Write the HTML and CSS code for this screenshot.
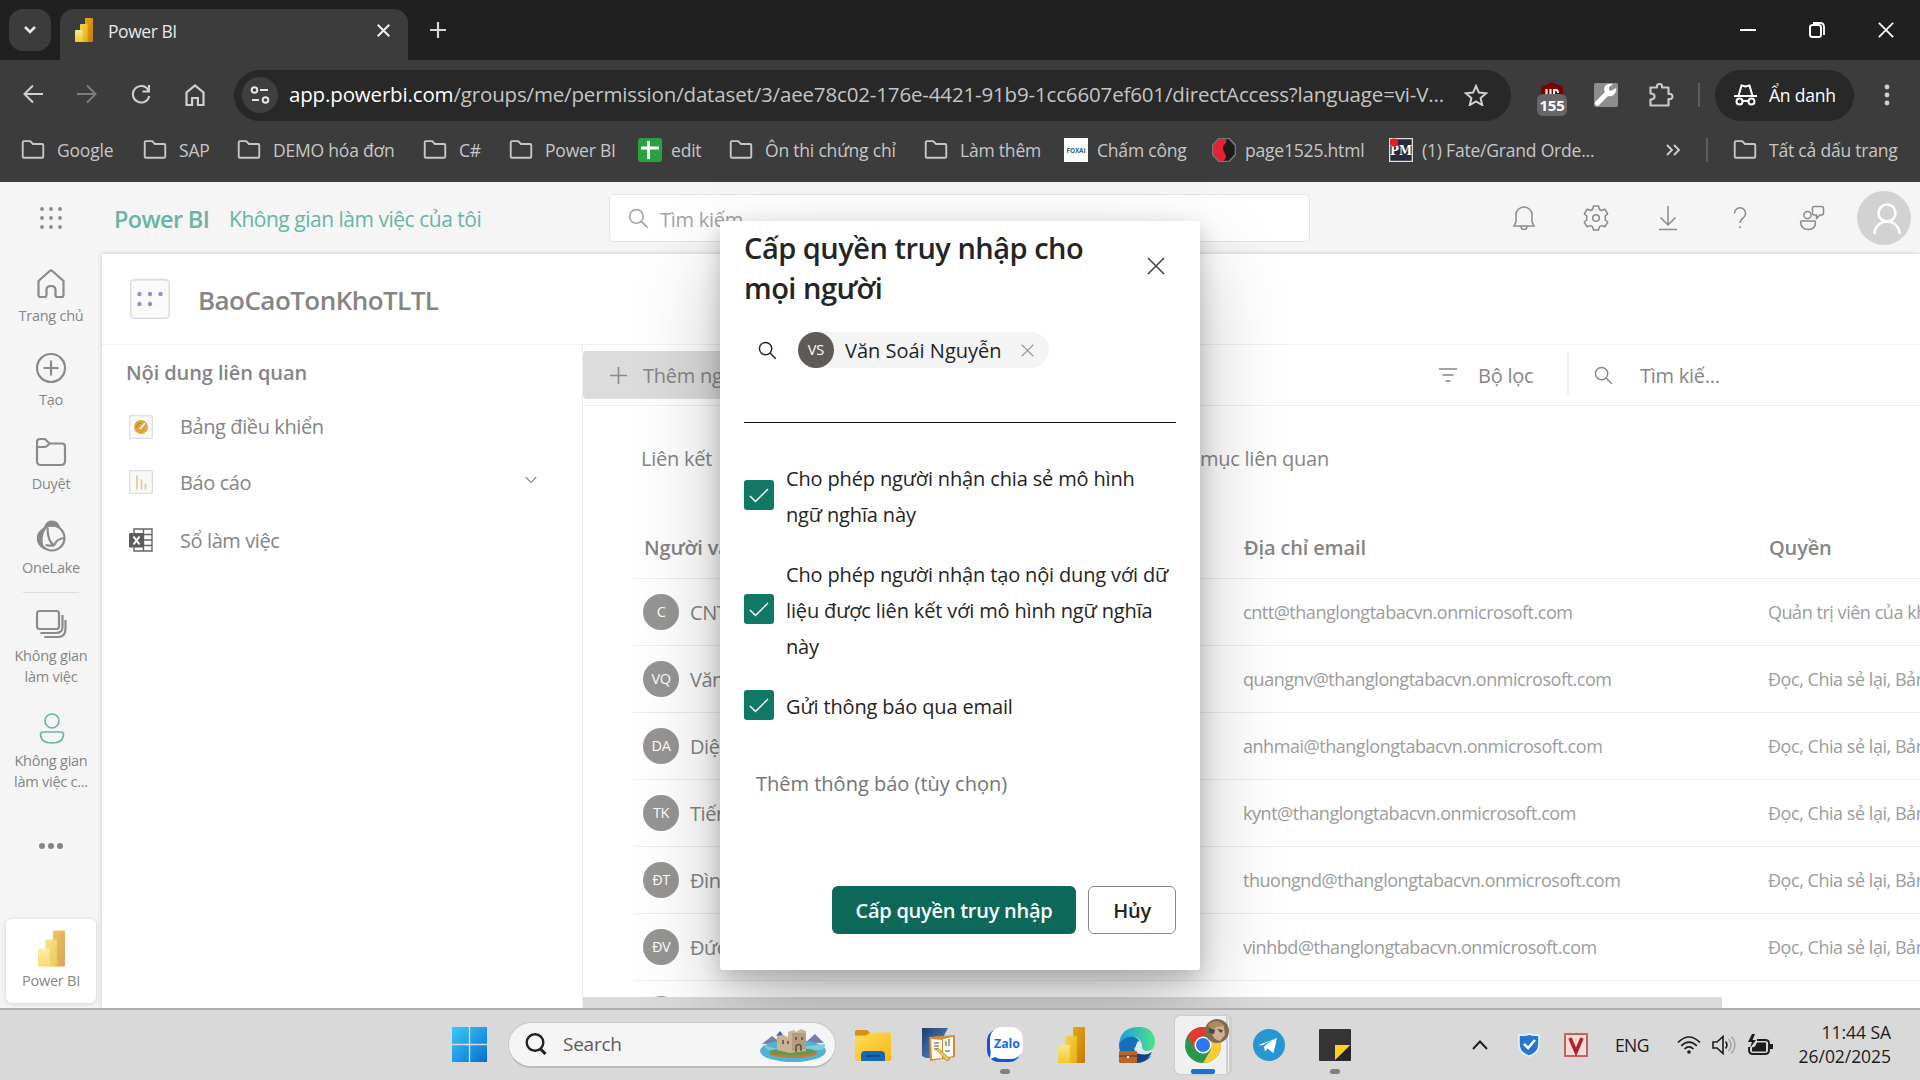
FILE: index.html
```html
<!DOCTYPE html>
<html lang="vi">
<head>
<meta charset="utf-8">
<title>Power BI</title>
<link rel="stylesheet" href="styles.css">
</head>
<body>
<svg class="defs" width="0" height="0">
  <defs>
    <linearGradient id="pbA" x1="0" y1="0" x2="1" y2="1"><stop offset="0" stop-color="#e5ab14"/><stop offset="1" stop-color="#c37a12"/></linearGradient>
    <linearGradient id="pbB" x1="0" y1="0" x2="1" y2="1"><stop offset="0" stop-color="#f6d550"/><stop offset="1" stop-color="#e6ad10"/></linearGradient>
    <linearGradient id="pbC" x1="0" y1="0" x2="0" y2="1"><stop offset="0" stop-color="#f9e68b"/><stop offset="1" stop-color="#f2cb2c"/></linearGradient>
    <linearGradient id="win" x1="0" y1="0" x2="1" y2="1"><stop offset="0" stop-color="#3cc8fb"/><stop offset="1" stop-color="#0670cf"/></linearGradient>
    <linearGradient id="fold" x1="0" y1="0" x2="1" y2="1"><stop offset="0" stop-color="#ffdc57"/><stop offset="1" stop-color="#f9b716"/></linearGradient>
    <linearGradient id="edgeA" x1="0" y1="0" x2="1" y2="0"><stop offset="0" stop-color="#1d9be0"/><stop offset="1" stop-color="#50e08a"/></linearGradient>
    <linearGradient id="note" x1="0" y1="0" x2="1" y2="1"><stop offset="0" stop-color="#1d3f70"/><stop offset="1" stop-color="#5d93cf"/></linearGradient>
  </defs>
  <symbol id="folder" viewBox="0 0 24 20"><path d="M1.2 17.5V2.4q0-1.2 1.2-1.2H9l3 3h9.600q1.200 0 1.200 1.200v12.100q0 1.200-1.200 1.200H2.400q-1.200 0-1.200-1.200z" fill="none" stroke="#c7c7c7" stroke-width="2"/></symbol>
  <symbol id="search" viewBox="0 0 20 20"><circle cx="8" cy="8" r="6.500" fill="none" stroke="currentColor" stroke-width="1.500"/><path d="M12.700 12.700l6 6" fill="none" stroke="currentColor" stroke-width="1.600"/></symbol>
  <symbol id="powerbi" viewBox="0 0 27 36"><rect x="15" width="12" height="36" rx="1" fill="url(#pbA)"/><path d="M7.500 10q0-1 1-1H18q1 0 1 1v26H7.500z" fill="url(#pbB)"/><path d="M0 19q0-1 1-1h10.500v18H1q-1 0-1-1z" fill="url(#pbC)"/></symbol>
  <symbol id="close" viewBox="0 0 18 18"><path d="M1 1l16 16M17 1L1 17" fill="none" stroke="currentColor"/></symbol>
</svg>

<header class="chrome">
  <div class="tabstrip">
    <button class="tab-search"><svg width="14" height="10" viewBox="0 0 14 10"><path d="M2 2l5 5 5-5" fill="none" stroke="#e8e8e8" stroke-width="2.600"/></svg></button>
    <div class="tab">
      <svg class="tab-icon" width="22" height="24"><use href="#powerbi"/></svg>
      <span class="tab-title">Power BI</span>
      <svg class="tab-close" width="13" height="13"><use href="#close"/></svg>
    </div>
    <svg class="new-tab" width="16" height="16" viewBox="0 0 16 16"><path d="M8 0v16M0 8h16" stroke="#d5d5d5" stroke-width="2.200"/></svg>
    <div class="window-buttons">
      <svg width="16" height="18" viewBox="0 0 16 18"><path d="M0 9h16" stroke="#fff" stroke-width="2"/></svg>
      <svg width="16" height="18" viewBox="0 0 16 18"><rect x="1" y="4" width="11" height="12" rx="2.500" fill="none" stroke="#fff" stroke-width="2"/><path d="M4 2h7q4 0 4 4v8" fill="none" stroke="#fff" stroke-width="1.800"/></svg>
      <svg width="16" height="16" viewBox="0 0 18 18"><path d="M1 1l16 16M17 1L1 17" stroke="#fff" stroke-width="2"/></svg>
    </div>
  </div>
  <div class="toolbar">
    <div class="nav">
      <svg width="20" height="20" viewBox="0 0 20 20"><path d="M20 10H2M10 1.500L1.500 10l8.500 8.500" fill="none" stroke="#d0d0d0" stroke-width="2"/></svg>
      <svg width="20" height="20" viewBox="0 0 20 20"><path d="M0 10h18M10 1.500l8.500 8.500-8.500 8.500" fill="none" stroke="#7d7d7d" stroke-width="2"/></svg>
      <svg width="20" height="20" viewBox="0 0 20 20"><path d="M17.600 6.500A8.300 8.300 0 1 0 18.300 12M18 1v6.500h-6.500" fill="none" stroke="#d0d0d0" stroke-width="2"/></svg>
      <svg width="20" height="22" viewBox="0 0 20 22"><path d="M1.500 21V8.500L10 1.500l8.500 7V21h-5.600v-7H7.100v7z" fill="none" stroke="#d0d0d0" stroke-width="2.200"/></svg>
    </div>
    <div class="omnibox">
      <span class="site-info"><svg width="20" height="18" viewBox="0 0 20 18"><g fill="none" stroke="#e5e5e5" stroke-width="2"><circle cx="4.500" cy="4" r="2.800"/><path d="M10 4h8M2 14h7"/><circle cx="15.500" cy="14" r="2.800"/></g></svg></span>
      <span class="url"><b>app.powerbi.com</b>/groups/me/permission/dataset/3/aee78c02-176e-4421-91b9-1cc6607ef601/directAccess?language=vi-V...</span>
      <svg class="star" width="24" height="22" viewBox="0 0 24 22"><path d="M12 2l2.900 6.600 7.100.7-5.400 4.700 1.600 7L12 17.300 5.800 21l1.600-7L2 9.300l7.100-.7z" fill="none" stroke="#d0d0d0" stroke-width="2"/></svg>
    </div>
    <div class="extensions">
      <div class="ublock"><svg width="24" height="26" viewBox="0 0 24 26"><path d="M1 4q6 0 11-4 5 4 11 4v12H1z" fill="#800000"/><path d="M6.500 7v6M10.500 7v6M14 14V8h2q2 0 2 3" stroke="#fff" stroke-width="2" fill="none"/></svg><span>155</span></div>
      <svg class="wrench" width="24" height="24" viewBox="0 0 24 24"><rect width="24" height="24" rx="2" fill="#8d8d8d"/><path d="M22 5l-5 3-2-1V4l4-3q-5-1-8 2-2 3 0 6L1 19q-1 3 3 4l10-10q5 1 7-3 2-2 1-5z" fill="#fff"/></svg>
      <svg class="puzzle" width="26" height="26" viewBox="0 0 26 26"><path d="M2.500 5.500H9Q8.500 2 11.500 2T14 5.500h6.500V12q4-.5 4 2.500t-4 2.500v6.500h-18v-6q4 0 4-3t-4-3z" fill="none" stroke="#c9c9c9" stroke-width="2.200" stroke-linejoin="round"/></svg>
      <i class="divider"></i>
      <div class="incognito"><svg width="23" height="22" viewBox="0 0 23 22"><g fill="none" stroke="#fff" stroke-width="2"><path d="M0 12h23M4.500 12L7.500 1.500l4 1 4-1 3 10.500"/><circle cx="5.500" cy="17.500" r="3"/><circle cx="17.500" cy="17.500" r="3"/><path d="M8.500 17h6"/></g></svg><span>Ẩn danh</span></div>
      <svg class="kebab" width="6" height="22" viewBox="0 0 6 22"><g fill="#cfcfcf"><circle cx="3" cy="3" r="2.400"/><circle cx="3" cy="11" r="2.400"/><circle cx="3" cy="19" r="2.400"/></g></svg>
    </div>
  </div>
  <div class="bookmarks">
    <a><svg width="24" height="19"><use href="#folder"/></svg>Google</a>
    <a><svg width="24" height="19"><use href="#folder"/></svg>SAP</a>
    <a><svg width="24" height="19"><use href="#folder"/></svg>DEMO hóa đơn</a>
    <a><svg width="24" height="19"><use href="#folder"/></svg>C#</a>
    <a><svg width="24" height="19"><use href="#folder"/></svg>Power BI</a>
    <a class="site"><svg width="24" height="24" viewBox="0 0 24 24"><rect width="24" height="24" rx="3" fill="#27a243"/><path d="M10.500 3v18M3 10h18" stroke="#fff" stroke-width="3"/></svg>edit</a>
    <a><svg width="24" height="19"><use href="#folder"/></svg>Ôn thi chứng chỉ</a>
    <a><svg width="24" height="19"><use href="#folder"/></svg>Làm thêm</a>
    <a class="site"><svg width="24" height="24" viewBox="0 0 24 24"><rect width="24" height="24" fill="#fff"/><text x="12" y="14.500" text-anchor="middle" textLength="19" lengthAdjust="spacingAndGlyphs" class="logo-text" fill="#1c5f9c">FOXAI</text></svg>Chấm công</a>
    <a class="site"><svg width="24" height="24" viewBox="0 0 24 24"><path d="M7 .5h10l6.500 7v9L17 23.500H7L.5 16.500v-9z" fill="#1b1b1b" stroke="#777"/><path d="M14 1H7L1 8v8l6 7h4q5-3 1.500-8.500Q9 9 13 6q2-2 1-5z" fill="#e22434"/></svg>page1525.html</a>
    <a class="site"><svg width="24" height="24" viewBox="0 0 24 24"><rect x=".5" y=".5" width="23" height="23" rx="1" fill="#252b3a" stroke="#ddd"/><text x="12" y="17" text-anchor="middle" textLength="22" lengthAdjust="spacingAndGlyphs" class="pm-text" fill="#fff">PM</text><circle cx="5" cy="4.500" r="4" fill="#f01c24"/></svg>(1) Fate/Grand Orde...</a>
    <svg class="more" width="14" height="12" viewBox="0 0 14 12"><path d="M1 1l5 5-5 5M8 1l5 5-5 5" fill="none" stroke="#d0d0d0" stroke-width="1.800"/></svg>
    <i class="divider"></i>
    <a><svg width="24" height="19"><use href="#folder"/></svg>Tất cả dấu trang</a>
  </div>
</header>

<main class="page">
  <div class="app-header">
    <svg class="waffle" width="22" height="22" viewBox="0 0 22 22"><g fill="#8b8b8b"><circle cx="2" cy="2" r="1.900"/><circle cx="11" cy="2" r="1.900"/><circle cx="20" cy="2" r="1.900"/><circle cx="2" cy="11" r="1.900"/><circle cx="11" cy="11" r="1.900"/><circle cx="20" cy="11" r="1.900"/><circle cx="2" cy="20" r="1.900"/><circle cx="11" cy="20" r="1.900"/><circle cx="20" cy="20" r="1.900"/></g></svg>
    <span class="brand">Power BI</span>
    <span class="crumb">Không gian làm việc của tôi</span>
    <div class="app-search"><svg width="21" height="21"><use href="#search"/></svg><span>Tìm kiếm</span></div>
    <div class="app-actions">
      <svg width="24" height="24" viewBox="0 0 24 24"><path d="M2 20l2-4.500V9a8 8 0 0 1 16 0v6.500L22 20zM9 20.500q0 3 3 3t3-3"/></svg>
      <svg width="26" height="26" viewBox="0 0 26 26"><path d="M10.500 1h5l1 3.500 2 1L22 4.300l2.700 4.500L22.300 11v4l2.400 2.300-2.700 4.400-3.500-1.100-2 1-1 3.400h-5l-1-3.400-2-1L4 21.700l-2.700-4.400L3.700 15v-4L1.300 8.800 4 4.300l3.500 1.200 2-1z" stroke-linejoin="round"/><circle cx="13" cy="13" r="3.300"/></svg>
      <svg width="20" height="26" viewBox="0 0 20 26"><path d="M10 1v19M2.500 12.500L10 20l7.500-7.500M1 24.500h18"/></svg>
      <svg width="14" height="22" viewBox="0 0 14 22"><path d="M1.500 6.500a5.500 5.500 0 1 1 8.700 4.300Q7 13 7 16M7 19.300v2"/></svg>
      <svg width="26" height="26" viewBox="0 0 26 26"><circle cx="8.500" cy="10" r="3.600"/><path d="M2.500 16h13q1 0 1 1 0 7.500-7.200 7.500T1.500 17q0-1 1-1zM15 1.500h7.500q2 0 2 2V8q0 2-2 2H21l-3.500 3.500V10H15q-1.500 0-1.500-2V3.500q0-2 1.500-2z"/></svg>
      <span class="user"><svg width="28" height="32" viewBox="0 0 28 32"><g fill="none" stroke="#fff" stroke-width="2.600"><circle cx="14" cy="10" r="8.500"/><path d="M1.500 31a12.500 12.500 0 0 1 25 0"/></g></svg></span>
    </div>
  </div>
  <div class="app-body">
    <nav class="rail">
      <div class="rail-item"><svg width="32" height="32" viewBox="0 0 32 32"><path d="M3.500 13L14.700 3q1.300-1 2.600 0l11.200 10v14q0 2-2 2h-4q-2 0-2-2v-5q0-4-4.500-4t-4.500 4v5q0 2-2 2h-4q-2 0-2-2z"/></svg><span>Trang chủ</span></div>
      <div class="rail-item"><svg width="32" height="32" viewBox="0 0 32 32"><circle cx="16" cy="16" r="14"/><path d="M16 8.500v15M8.500 16h15"/></svg><span>Tạo</span></div>
      <div class="rail-item"><svg width="32" height="32" viewBox="0 0 32 32"><path d="M2 9V6q0-3 3-3h5l4.500 4.500H27q3 0 3 3V25q0 4-4 4H6q-4 0-4-4zM2 11h7q2 0 3-1l2.500-2.500"/></svg><span>Duyệt</span></div>
      <div class="rail-item"><svg width="32" height="32" viewBox="0 0 32 32"><circle cx="17" cy="18" r="12.500"/><path d="M10.500 6.500Q12 1.500 17 1.500t7 5.500q-6-2.500-13.500-.5zM9.500 9Q2 12 3 20q.5 4 4.500 7-3-9 2-18z" fill="#8a8a8a"/><path d="M12.500 7.500q0 14 7 18.500M10.500 25q9 2 10-2 2-4 9-5"/></svg><span>OneLake</span></div>
      <hr>
      <div class="rail-item"><svg width="32" height="32" viewBox="0 0 32 32"><rect x="2" y="3" width="22" height="18" rx="2.500"/><path d="M5.500 25H21q6.500 0 6.500-6V7M9.500 29H23q7.500 0 7.500-8v-9"/></svg><span>Không gian<br>làm việc</span></div>
      <div class="rail-item me"><svg width="32" height="32" viewBox="0 0 32 32"><circle cx="17" cy="8" r="7"/><path d="M8 19h18q2.500 0 2.500 2.500Q28 30 17 30T5.500 21.500Q5.500 19 8 19z"/></svg><span>Không gian<br>làm việc c...</span></div>
      <div class="rail-dots"><i></i><i></i><i></i></div>
      <div class="rail-tile"><svg width="27" height="37"><use href="#powerbi"/></svg><span>Power BI</span></div>
    </nav>
    <section class="card">
      <div class="card-title">
        <svg width="40" height="40" viewBox="0 0 40 40"><rect x=".7" y=".7" width="38.600" height="38.600" rx="4" fill="#fafafa" stroke="#dadada" stroke-width="1.400"/><g fill="#9d8ad0"><circle cx="9.500" cy="15" r="2.200"/><circle cx="20" cy="15" r="2.200"/><circle cx="30.500" cy="15" r="2.200"/><circle cx="9.500" cy="25" r="2.200"/><circle cx="20" cy="25" r="2.200"/></g></svg>
        <h1>BaoCaoTonKhoTLTL</h1>
      </div>
      <div class="card-body">
        <aside class="related">
          <h2>Nội dung liên quan</h2>
          <div class="rel"><svg width="24" height="24" viewBox="0 0 24 24"><rect x=".5" y=".5" width="23" height="23" rx="2" fill="#f8f8f8" stroke="#dfdfdf"/><circle cx="12" cy="12" r="7" fill="#dfa63f"/><path d="M11 14l5-6" stroke="#fff" stroke-width="1.500"/><path d="M7.500 13a5 5 0 0 1 5-5" fill="none" stroke="#c98b25"/></svg><span>Bảng điều khiển</span></div>
          <div class="rel"><svg width="24" height="24" viewBox="0 0 24 24"><rect x=".5" y=".5" width="23" height="23" rx="2" fill="#f8f8f8" stroke="#dfdfdf"/><path d="M8 5.500v14M12.500 9.500v10M16.500 13.500v6" stroke="#e3c583" stroke-width="1.500"/></svg><span>Báo cáo</span><svg class="chev" width="12" height="8" viewBox="0 0 12 8"><path d="M.7 1l5.300 5.500L11.300 1" fill="none" stroke="#8a8a8a" stroke-width="1.200"/></svg></div>
          <div class="rel"><svg width="24" height="24" viewBox="0 0 24 24"><path d="M5 1h18v22H5zM14.500 1v22M14 6.500h9M14 12h9M14 17.500h9" fill="none" stroke="#666" stroke-width="1.400"/><rect y="5" width="15" height="14.500" rx="1" fill="#5c5c5c"/><path d="M4.500 8.500l6 8M10.500 8.500l-6 8" stroke="#fff" stroke-width="2"/></svg><span>Sổ làm việc</span></div>
        </aside>
        <div class="content">
          <div class="commands">
            <div class="add-user"><svg width="17" height="17" viewBox="0 0 17 17"><path d="M8.500 0v17M0 8.500h17" stroke="#8a8a8a" stroke-width="1.600"/></svg><span>Thêm người dùng</span></div>
            <div class="filter"><svg width="18" height="14" viewBox="0 0 18 14"><path d="M0 1h18M3.500 7h11M6.500 13h5" stroke="#858585" stroke-width="1.600"/></svg><span>Bộ lọc</span></div>
            <div class="find"><svg width="19" height="19"><use href="#search"/></svg><span>Tìm kiế...</span></div>
          </div>
          <div class="tabs"><span>Liên kết</span><span>Quyền từ các mục liên quan</span></div>
          <div class="table">
            <div class="row head"><span>Người và nhóm</span><span>Địa chỉ email</span><span>Quyền</span></div>
            <div class="row"><span class="who"><i>C</i>CNTT</span><span>cntt@thanglongtabacvn.onmicrosoft.com</span><span>Quản trị viên của không gian</span></div>
            <div class="row"><span class="who"><i>VQ</i>Văn Quang</span><span>quangnv@thanglongtabacvn.onmicrosoft.com</span><span>Đọc, Chia sẻ lại, Bản dựng</span></div>
            <div class="row"><span class="who"><i>DA</i>Diệp Anh</span><span>anhmai@thanglongtabacvn.onmicrosoft.com</span><span>Đọc, Chia sẻ lại, Bản dựng</span></div>
            <div class="row"><span class="who"><i>TK</i>Tiến Kỳ</span><span>kynt@thanglongtabacvn.onmicrosoft.com</span><span>Đọc, Chia sẻ lại, Bản dựng</span></div>
            <div class="row"><span class="who"><i>ĐT</i>Đình Thương</span><span>thuongnd@thanglongtabacvn.onmicrosoft.com</span><span>Đọc, Chia sẻ lại, Bản dựng</span></div>
            <div class="row"><span class="who"><i>ĐV</i>Đức Vinh</span><span>vinhbd@thanglongtabacvn.onmicrosoft.com</span><span>Đọc, Chia sẻ lại, Bản dựng</span></div>
            <div class="row"><span class="who"><i></i></span></div>
          </div>
          <div class="scrollbar"></div>
        </div>
      </div>
    </section>
  </div>

  <div class="dialog" role="dialog">
    <div class="dialog-head"><h2>Cấp quyền truy nhập cho mọi người</h2><svg width="18" height="18"><use href="#close"/></svg></div>
    <div class="people">
      <svg width="19" height="19"><use href="#search"/></svg>
      <span class="chip"><i>VS</i><span>Văn Soái Nguyễn</span><svg width="13" height="13"><use href="#close"/></svg></span>
    </div>
    <div class="checks">
      <label><i><svg width="20" height="15" viewBox="0 0 20 15"><path d="M1 8l5.500 5.500L19 1" fill="none" stroke="#fff" stroke-width="1.500"/></svg></i><span>Cho phép người nhận chia sẻ mô hình<br>ngữ nghĩa này</span></label>
      <label><i><svg width="20" height="15" viewBox="0 0 20 15"><path d="M1 8l5.500 5.500L19 1" fill="none" stroke="#fff" stroke-width="1.500"/></svg></i><span>Cho phép người nhận tạo nội dung với dữ<br>liệu được liên kết với mô hình ngữ nghĩa<br>này</span></label>
      <label><i><svg width="20" height="15" viewBox="0 0 20 15"><path d="M1 8l5.500 5.500L19 1" fill="none" stroke="#fff" stroke-width="1.500"/></svg></i><span>Gửi thông báo qua email</span></label>
    </div>
    <div class="message">Thêm thông báo (tùy chọn)</div>
    <div class="dialog-foot"><button class="primary">Cấp quyền truy nhập</button><button class="secondary">Hủy</button></div>
  </div>
</main>

<footer class="taskbar">
  <svg class="start" width="35" height="35" viewBox="0 0 35 35"><path d="M0 0h16.800v16.800H0zM18.200 0H35v16.800H18.200zM0 18.200h16.800V35H0zM18.200 18.200H35V35H18.200z" fill="url(#win)"/></svg>
  <div class="task-search">
    <svg width="22" height="22" viewBox="0 0 22 22"><circle cx="10" cy="9.500" r="8.300" fill="none" stroke="#222" stroke-width="2.400"/><path d="M15.500 16l5 5" stroke="#222" stroke-width="3"/></svg>
    <span>Search</span>
    <svg width="70" height="40" viewBox="0 0 70 40"><path d="M4 20l10-8 8 6h26l9-8 9 9z" fill="#777fa6"/><ellipse cx="35" cy="27" rx="33" ry="11" fill="#50b3d1"/><path d="M4 20q12 6 30 4T67 20q0 6-5 6H10z" fill="#79cbe0"/><ellipse cx="35" cy="29" rx="24" ry="5" fill="#b87c45"/><ellipse cx="35" cy="27.500" rx="22" ry="3.500" fill="#5f9c43"/><path d="M19 12l4-2 7 3V8l6-2 2 2 5-3 5 2v20l-16 2-13-3z" fill="#c9b499"/><path d="M34 9v18l14-2V9z" fill="#b59d82"/><path d="M18 12l4-5 3 4z" fill="#3c6899"/><path d="M25 16v4M30 17v3M38 13v3M44 13v3M38 28v-6q3-3 5 0v5" stroke="#5c493a" stroke-width="1.500" fill="none"/></svg>
  </div>
  <div class="pinned">
    <div class="slot"><svg width="36" height="32" viewBox="0 0 36 32"><rect y="3.500" width="36" height="28.500" rx="2" fill="url(#fold)"/><path d="M0 6.500h11l4-3-3-2.500H2Q0 1 0 3z" fill="#d29014"/><path d="M6 32V26q0-4 4-4h16q4 0 4 4v6z" fill="#1767b8"/><path d="M11 27h14" stroke="#0d4585" stroke-width="1.600"/></svg></div>
    <div class="slot"><svg width="36" height="36" viewBox="0 0 36 36"><path d="M1 1h26L11 31H5l-4-2z" fill="url(#note)"/><path d="M8 10l26-2v22l-12 2-13 2z" fill="#d78b38"/><path d="M10 12l11 1v18l-10 1zM22 12l10-2v19l-10 2z" fill="#fffdf4"/><path d="M13 16h5M13 19h5M13 22h4M25 19v-5M28 19v-7M24 24h5" stroke="#886" stroke-width="1.500"/><path d="M15 22l2-1 12 11-3 2z" fill="#edcc55" stroke="#967523" stroke-width=".7"/></svg></div>
    <div class="slot open"><svg width="36" height="36" viewBox="0 0 36 36"><rect y="2" width="34" height="33" rx="12" fill="#1454dd"/><rect x="3" width="33" height="32" rx="12" fill="#fff"/><path d="M4 22l-1 10 8-3z" fill="#fff"/><text x="20" y="21" text-anchor="middle" textLength="26" lengthAdjust="spacingAndGlyphs" class="zalo-text" fill="#1668f5">Zalo</text></svg></div>
    <div class="slot"><svg width="27" height="36"><use href="#powerbi"/></svg></div>
    <div class="slot"><svg width="36" height="36" viewBox="0 0 36 36"><path d="M0 18Q1 1 18 0t18 15q0 9-9 9-6 0-6-4 3-4-1-8Q14 6 0 18z" fill="url(#edgeA)"/><path d="M0 17q6-9 15-7 7 2 6 9-4-2-6 3 0 9 11 9 4 0 7-3-6 8-15 8Q0 36 0 17z" fill="#146fbd"/><path d="M15 21q0 10 18 4-5 10-15 11-8-5-3-15z" fill="#173f83"/><path d="M19 14q5 1 4 7 3 5 11 3-7 6-14 2-6-5-1-12z" fill="#dfe6ea"/><rect y="24" width="18" height="12" rx="1" fill="#ba642d"/><path d="M0 29h18" stroke="#83401b"/><circle cx="9" cy="30" r="1.300" fill="#ffe1a0"/></svg></div>
    <div class="slot active"><svg width="36" height="36" viewBox="0 0 36 36"><circle cx="18" cy="18" r="18" fill="#27974b"/><path d="M18 36l8-13.500V9h7.600A18 18 0 0 1 18 36z" fill="#fcc934"/><path d="M2.400 9A18 18 0 0 1 33.600 9H18l-8 13.500z" fill="#e33b2e"/><circle cx="18" cy="18" r="8.600" fill="#fff"/><circle cx="18" cy="18" r="7" fill="#2b78ee"/></svg>
      <svg class="profile" width="24" height="24" viewBox="0 0 24 24"><circle cx="12" cy="12" r="12" fill="#806b50"/><path d="M6 5q9-4 13 3l1 8-5 6q-8-2-8-9z" fill="#d2ae93"/><path d="M3 6q8-8 17 1l-9 1-3 5z" fill="#a98d62"/><path d="M4 9l6 2-1 4-5-1zM12 10l6 1-2 3z" fill="#464b50"/></svg></div>
    <div class="slot"><svg width="32" height="32" viewBox="0 0 32 32"><circle cx="16" cy="16" r="16" fill="#2797d2"/><path d="M5.500 16L24 9l-3.500 15-6-4.500-2.500 3-1-5 9-7-11 6z" fill="#fff"/></svg></div>
    <div class="slot open"><svg width="32" height="32" viewBox="0 0 32 32"><rect width="32" height="32" rx="1" fill="#343434"/><path d="M16 16h15.500L16 31z" fill="#ffd21c"/><path d="M31.500 16v15.500H16z" fill="#252525"/></svg></div>
  </div>
  <div class="tray">
    <svg width="16" height="10" viewBox="0 0 16 10"><path d="M1 9l7-7.500L15 9" fill="none" stroke="#1c1c1c" stroke-width="1.900"/></svg>
    <svg width="22" height="24" viewBox="0 0 22 24"><path d="M1 2q6 1 10-1 4 2 10 1v9q0 9-10 12Q1 20 1 11z" fill="#2476cf" stroke="#e9f3ff" stroke-width="1.500"/><path d="M6 11l4 4 7-8" fill="none" stroke="#fff" stroke-width="2.600"/></svg>
    <svg width="24" height="24" viewBox="0 0 24 24"><rect x="1" y="1" width="22" height="22" fill="#f6dcd9" stroke="#c9605c" stroke-width="2"/><path d="M6 5l6 14 6-14" fill="none" stroke="#b31f25" stroke-width="3.500"/></svg>
    <span class="lang">ENG</span>
    <svg width="24" height="18" viewBox="0 0 24 18"><g fill="none" stroke="#1c1c1c" stroke-width="1.700"><path d="M1 6.500q11-11 22 0M4.200 9.800q7.800-7.500 15.600 0M7.500 13q4.500-4.200 9 0"/></g><circle cx="12" cy="16" r="1.800" fill="#1c1c1c"/></svg>
    <svg width="24" height="20" viewBox="0 0 24 20"><path d="M1 7h4l6-5.500v17L5 13H1z" fill="none" stroke="#1c1c1c" stroke-width="1.600"/><path d="M13.500 6.500q3 3.500 0 7" fill="none" stroke="#1c1c1c" stroke-width="1.600"/><path d="M16.500 4q5 6 0 12M19.500 1.500q7 8.500 0 17" fill="none" stroke="#a5a5a5" stroke-width="1.500"/></svg>
    <svg width="26" height="22" viewBox="0 0 26 22"><path d="M10 6h8q4 0 4 3v7q0 4-4 4H6q-4 0-4-4v-3" fill="none" stroke="#1c1c1c" stroke-width="1.900"/><path d="M10 8.500h9v9H5v-4l3-1z" fill="#1c1c1c"/><path d="M5 0L1 8h4L3 14l6-8H5.500L8 0zM23 10h3v5h-3z" fill="#1c1c1c"/></svg>
    <div class="clock"><span>11:44 SA</span><span>26/02/2025</span></div>
  </div>
</footer>
</body>
</html>
```
FILE: styles.css
```css
* { box-sizing: border-box; }
body {
  margin: 0;
  width: 1920px;
  height: 1080px;
  overflow: hidden;
  display: flex;
  flex-direction: column;
  font-family: "Open Sans", "Noto Sans", sans-serif;
  font-size: 20px;
  letter-spacing: -0.25px;
  white-space: nowrap;
}
.defs { position: absolute; }
svg { flex: none; display: block; stroke-width: 1.600; }
h1, h2 { margin: 0; font-weight: 600; }
button { font: inherit; letter-spacing: inherit; border: 0; padding: 0; }

/* Browser chrome */
.chrome { height: 182px; background: #3c3c3c; flex: none; }
.tabstrip { height: 60px; background: #202020; display: flex; align-items: center; padding-left: 9px; }
.tab-search { width: 42px; height: 42px; border-radius: 14px; background: #3c3c3c; display: grid; place-items: center; }
.tab {
  width: 348px; height: 51px; margin-left: 9px; align-self: flex-end;
  background: #3c3c3c; border-radius: 14px 14px 0 0;
  display: flex; align-items: center; padding: 0 18px 0 13px;
}
.tab-title { margin-left: 13px; font-size: 17.500px; letter-spacing: -0.45px; color: #e6e6e6; flex: 1; padding-bottom: 7px; }
.tab-icon { margin-bottom: 9px; }
.tab-close { color: #eee; margin-bottom: 9px; stroke-width: 2.800; }
.new-tab { margin-left: 22px; }
.window-buttons { margin-left: auto; display: flex; gap: 53px; align-items: center; margin-right: 26px; }
.toolbar { height: 70px; display: flex; align-items: center; background: #3c3c3c; }
.nav { display: flex; margin-left: 6px; width: 228px; }
.nav svg { margin: 0 17px; }
.omnibox { width: 1277px; height: 51px; border-radius: 26px; background: #282828; display: flex; align-items: center; padding: 0 23px 0 8px; }
.site-info { width: 36px; height: 36px; border-radius: 50%; background: #3f3f3f; display: grid; place-items: center; }
.url { margin-left: 11px; flex: 1; font-size: 20.500px; letter-spacing: -0.155px; color: #c4c4c4; padding-bottom: 2px; }
.url b { font-weight: 400; color: #fff; }
.extensions { display: flex; align-items: center; flex: 1; padding-left: 26px; }
.ublock { width: 30px; height: 34px; display: grid; justify-items: center; margin-top: 8px; }
.ublock svg, .ublock span { grid-area: 1 / 1; }
.ublock span { align-self: end; width: 30px; height: 22px; border-radius: 6px; background: #666; color: #fff; font: 700 15px/22px "Open Sans", sans-serif; text-align: center; }
.wrench { margin-left: 27px; }
.puzzle { margin-left: 30px; }
.divider { width: 2px; height: 24px; background: #5c5c5c; }
.extensions .divider { margin-left: 24px; }
.incognito { margin-left: 15px; width: 139px; height: 51px; border-radius: 26px; background: #282828; display: flex; align-items: center; padding-left: 19px; gap: 12px; color: #fff; font-size: 17.500px; letter-spacing: -0.2px; }
.incognito span { padding-bottom: 1px; }
.kebab { margin-left: 30px; }
.bookmarks {
  height: 40px; display: grid; align-items: center; padding-left: 21px;
  grid-template-columns: 122px 94px 186px 86px 129px 91px 195px 140px 148px 177px 277px 40px 27px auto;
  font-size: 17.500px; line-height: 22px; letter-spacing: -0.2px; color: #c7c7c7;
  padding-bottom: 1px;
}
.bookmarks a { display: flex; align-items: center; gap: 12px; }
.bookmarks a.site { gap: 9px; }
.logo-text { font: 700 6.500px "Open Sans", sans-serif; letter-spacing: 0; }
.pm-text { font: 700 13px "DejaVu Serif", serif; letter-spacing: 0; }

/* Power BI page */
.page { height: 826px; position: relative; overflow: hidden; background: #f5f5f5; color: #858585; flex: none; }
.app-header { height: 72px; display: flex; align-items: center; padding-left: 40px; }
.brand { margin-left: 52px; width: 115px; font-size: 23.500px; font-weight: 600; letter-spacing: -0.65px; color: #6ab3a6; padding-top: 2px; }
.crumb { width: 380px; font-size: 21px; letter-spacing: -0.48px; color: #6ab3a6; padding-top: 2px; }
.app-search { width: 701px; height: 48px; border: 1px solid #e3e3e3; border-radius: 5px; background: #fff; color: #a3a3a3; display: flex; align-items: center; padding-left: 18px; gap: 11px; }
.app-search span { padding-top: 2px; }
.app-actions { display: flex; align-items: center; margin-left: 178px; }
.app-actions > svg { width: 72px; fill: none; stroke: #8a8a8a; stroke-width: 1.500; }
.user { width: 54px; height: 54px; margin-left: 9px; border-radius: 50%; background: #d2d2d2; display: grid; place-items: center; }
.user svg { margin: 2px 0 0 5px; }
.app-body { display: flex; height: 754px; }
.rail { width: 102px; display: flex; flex-direction: column; align-items: center; font-size: 14.500px; letter-spacing: -0.25px; line-height: 21px; text-align: center; color: #858585; }
.rail-item { padding: 14px 0 11px; display: flex; flex-direction: column; align-items: center; gap: 5px; height: 84px; flex: none; }
.rail-item:has(br) { height: 105px; }
.rail-item svg { fill: none; stroke: #8a8a8a; stroke-width: 2.200; }
.rail-item.me svg { stroke: #6ab3a6; stroke-width: 1.600; }
.rail hr { width: 56px; height: 1px; margin: 2px 0 1px; border: 0; background: #dcdcdc; flex: none; }
.rail-dots { display: flex; gap: 3px; margin: 39px 0 70px; }
.rail-dots i { width: 6px; height: 6px; border-radius: 50%; background: #858585; }
.rail-tile { width: 90px; height: 84px; border-radius: 6px; background: #fff; box-shadow: 0 1px 5px rgba(0,0,0,.16); padding-top: 11px; display: flex; flex-direction: column; align-items: center; gap: 3px; flex: none; }
.rail-tile svg { opacity: .68; }
.card { width: 1818px; background: #fff; box-shadow: 0 0 5px rgba(0,0,0,.18); }
.card-title { height: 91px; border-bottom: 1px solid #f0f0f0; display: flex; align-items: center; padding-left: 28px; gap: 28px; }
.card-title h1 { font-size: 26px; letter-spacing: -0.55px; padding-top: 2px; }
.card-body { display: flex; height: 663px; }
.related { width: 481px; border-right: 1px solid #ededed; padding: 12px 0 0 24px; }
.related h2 { font-size: 20px; line-height: 32px; letter-spacing: -0.1px; }
.rel { display: flex; align-items: center; height: 58px; padding-left: 3px; letter-spacing: -0.4px; }
.related h2 + .rel { margin-top: 11px; height: 53px; }
.rel span { margin-left: 27px; flex: 1; }
.rel .chev { margin-right: 45px; margin-bottom: 4px; }
.content { flex: 1; min-width: 0; display: flex; flex-direction: column; }
.commands { height: 61px; border-bottom: 1px solid #ededed; display: flex; align-items: center; }
.add-user { width: 320px; height: 48px; background: #dcdcdc; border-radius: 4px; display: flex; align-items: center; padding-left: 27px; gap: 16px; }
.filter { margin-left: 536px; width: 130px; height: 44px; border-right: 2px solid #f0f0f0; display: flex; align-items: center; gap: 21px; }
.find { margin-left: 25px; display: flex; align-items: center; gap: 27px; }
.tabs { height: 108px; display: flex; align-items: center; padding: 0 1px 4px 58px; width: 747px; justify-content: space-between; }
.table { margin-left: 50px; flex: 1; overflow: hidden; }
.row { display: grid; grid-template-columns: 600px 525px auto; height: 67px; align-items: center; border-bottom: 1px solid #ededed; padding-left: 10px; font-size: 18px; letter-spacing: -0.46px; color: #9c9c9c; }
.row.head { height: 65px; padding-left: 11px; font-weight: 600; font-size: 20px; letter-spacing: -0.15px; color: #858585; padding-top: 2px; }
.who { display: flex; align-items: center; gap: 11px; font-size: 20px; color: #858585; }
.who i, .chip i { width: 36px; height: 36px; border-radius: 50%; background: #969594; color: #fff; font: 500 14.500px/36px "Open Sans", sans-serif; text-align: center; }
.scrollbar { width: 1139px; height: 11px; background: #dadada; flex: none; }

/* Share dialog floats over the page */
.dialog {
  position: absolute; left: 720px; top: 39px; width: 480px; height: 749px; padding: 7px 24px 0;
  background: #fff; border-radius: 3px; color: #242424; letter-spacing: -0.15px;
  box-shadow: 0 38px 86px rgba(0,0,0,.24), 0 7px 22px rgba(0,0,0,.2);
}
.dialog-head { display: flex; justify-content: space-between; padding-right: 11px; }
.dialog-head h2 { width: 350px; font-size: 29px; line-height: 40px; letter-spacing: -0.5px; white-space: normal; }
.dialog-head svg { margin-top: 29px; color: #444; }
.people { height: 115px; padding: 24px 0 0 14px; border-bottom: 1.500px solid #111; display: flex; align-items: flex-start; }
.people > svg { margin-top: 9px; }
.chip { margin-left: 21px; width: 251px; height: 36px; border-radius: 18px; background: #f4f4f4; display: flex; align-items: center; }
.chip i { background: #5d5a58; }
.chip span { margin-left: 11px; width: 176px; letter-spacing: 0; padding-top: 1px; }
.chip svg { color: #999; }
.checks { padding-top: 38px; display: flex; flex-direction: column; gap: 24px; line-height: 36px; }
.checks label { display: flex; align-items: center; gap: 12px; }
.checks i { width: 30px; height: 30px; border-radius: 3px; background: #117865; display: grid; place-items: center; flex: none; margin-bottom: 4px; }
.message { margin: 41px 0 0 12px; color: #757575; line-height: 36px; letter-spacing: 0; }
.dialog-foot { display: flex; justify-content: flex-end; gap: 12px; margin-top: 84px; }
.dialog-foot button { height: 48px; border-radius: 6px; font-weight: 600; padding-top: 1px; letter-spacing: -0.25px; }
.primary { width: 244px; background: #0c695a; color: #fff; }
.secondary { width: 88px; background: #fff; border: 1.500px solid #888; color: #242424; }

/* Taskbar */
.taskbar { height: 72px; background: #d9d9d9; border-top: 2px solid #adadad; display: flex; align-items: center; padding: 0 0 1px 452px; flex: none; }
.task-search { margin-left: 21px; width: 328px; height: 46px; border-radius: 23px; background: #f5f5f5; border: 1px solid #c8c8c8; border-bottom: 2px solid #bbb; display: flex; align-items: center; padding-left: 16px; color: #5b5b5b; }
.task-search span { margin-left: 16px; width: 195px; font-size: 19px; }
.pinned { margin-left: 4px; display: flex; }
.slot { width: 66px; height: 58px; position: relative; display: grid; place-items: center; }
.slot.open::after { content: ""; position: absolute; bottom: 0; left: 28px; width: 10px; height: 5px; border-radius: 3px; background: #808080; }
.slot.active { width: 56px; margin: 0 5px; border-radius: 5px; background: #f0f0f0; border-right: 5px double #d0d0d0; padding-left: 5px; box-shadow: 0 0 2px #aaa; }
.slot.active::after { content: ""; position: absolute; bottom: 0; left: 16px; width: 24px; height: 5px; border-radius: 2px; background: #1573d1; }
.profile { position: absolute; right: -3px; top: 3px; }
.zalo-text { font: 700 13px "Open Sans", sans-serif; letter-spacing: 0; }
.tray { margin-left: auto; padding-right: 29px; display: flex; align-items: center; color: #1c1c1c; font-size: 17.500px; }
.tray svg:nth-child(2) { margin-left: 30px; }
.tray svg:nth-child(3) { margin-left: 24px; }
.lang { margin: 0 27px; width: 35px; letter-spacing: -0.6px; }
.tray svg:nth-child(6) { margin-left: 11px; }
.tray svg:nth-child(7) { margin-left: 11px; }
.clock { width: 118px; display: flex; flex-direction: column; text-align: right; line-height: 24px; letter-spacing: -0.05px; padding-bottom: 1px; }
```
